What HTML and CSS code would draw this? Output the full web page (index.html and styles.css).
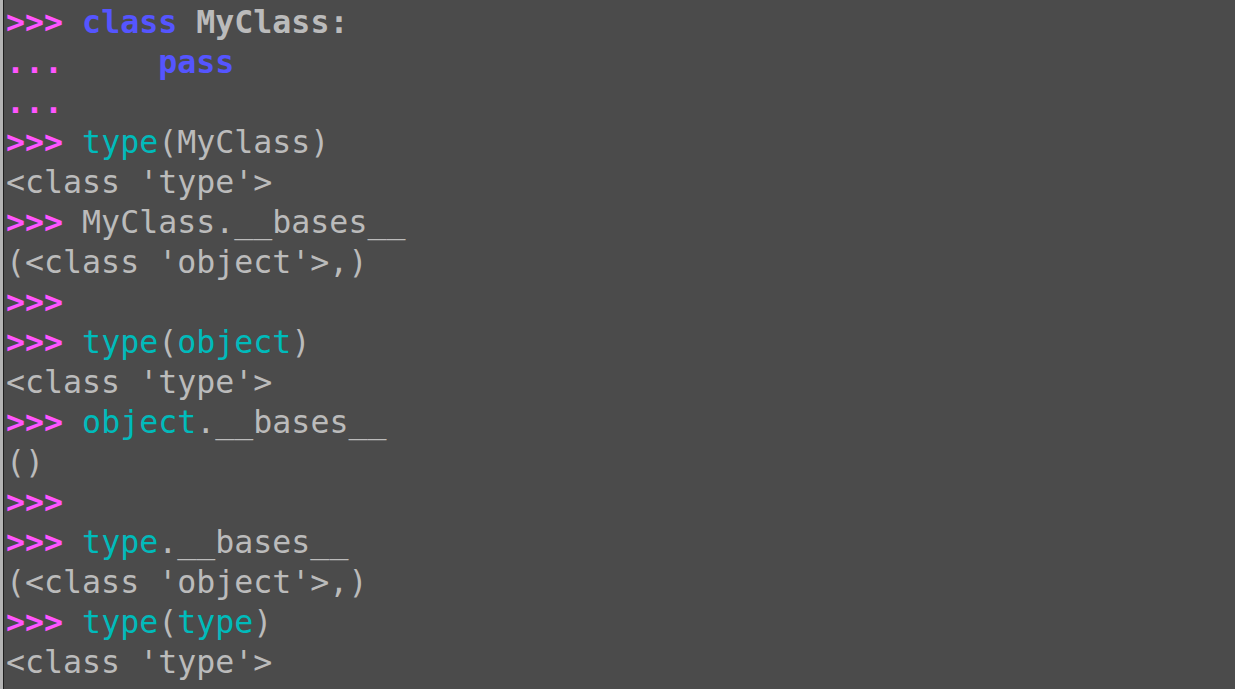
FILE: index.html
```html
<!DOCTYPE html>
<html>
<head>
<meta charset="utf-8">
<link rel="stylesheet" href="styles.css">
</head>
<body>
<div class="window">
<div class="edge"></div>
<pre class="term"><span class="p">&gt;&gt;&gt;</span> <span class="kw">class</span> <span class="b">MyClass:</span>
<span class="p">...</span>     <span class="kw">pass</span>
<span class="p">...</span>
<span class="p">&gt;&gt;&gt;</span> <span class="bi">type</span>(MyClass)
&lt;class 'type'&gt;
<span class="p">&gt;&gt;&gt;</span> MyClass.__bases__
(&lt;class 'object'&gt;,)
<span class="p">&gt;&gt;&gt;</span>
<span class="p">&gt;&gt;&gt;</span> <span class="bi">type</span>(<span class="bi">object</span>)
&lt;class 'type'&gt;
<span class="p">&gt;&gt;&gt;</span> <span class="bi">object</span>.__bases__
()
<span class="p">&gt;&gt;&gt;</span>
<span class="p">&gt;&gt;&gt;</span> <span class="bi">type</span>.__bases__
(&lt;class 'object'&gt;,)
<span class="p">&gt;&gt;&gt;</span> <span class="bi">type</span>(<span class="bi">type</span>)
&lt;class 'type'&gt;</pre>
</div>
</body>
</html>
```
FILE: styles.css
```css
html, body {
  margin: 0;
  padding: 0;
  height: 100%;
  background: #4b4b4b;
}
.window {
  display: flex;
  height: 689px;
  overflow: hidden;
}
.edge {
  width: 3px;
  background: #b4b4b4;
  border-right: 1px solid #1e1e1e;
  flex: none;
}
.term {
  margin: 0;
  padding: 2px 0 0 2px;
  font-family: "DejaVu Sans Mono", monospace;
  font-size: 31.6px;
  line-height: 40px;
  color: #bbbbbb;
  white-space: pre;
}
.p { color: #ff55ff; font-weight: bold; }
.kw { color: #5555ff; font-weight: bold; }
.b { font-weight: bold; }
.bi { color: #00bbbb; }
```
